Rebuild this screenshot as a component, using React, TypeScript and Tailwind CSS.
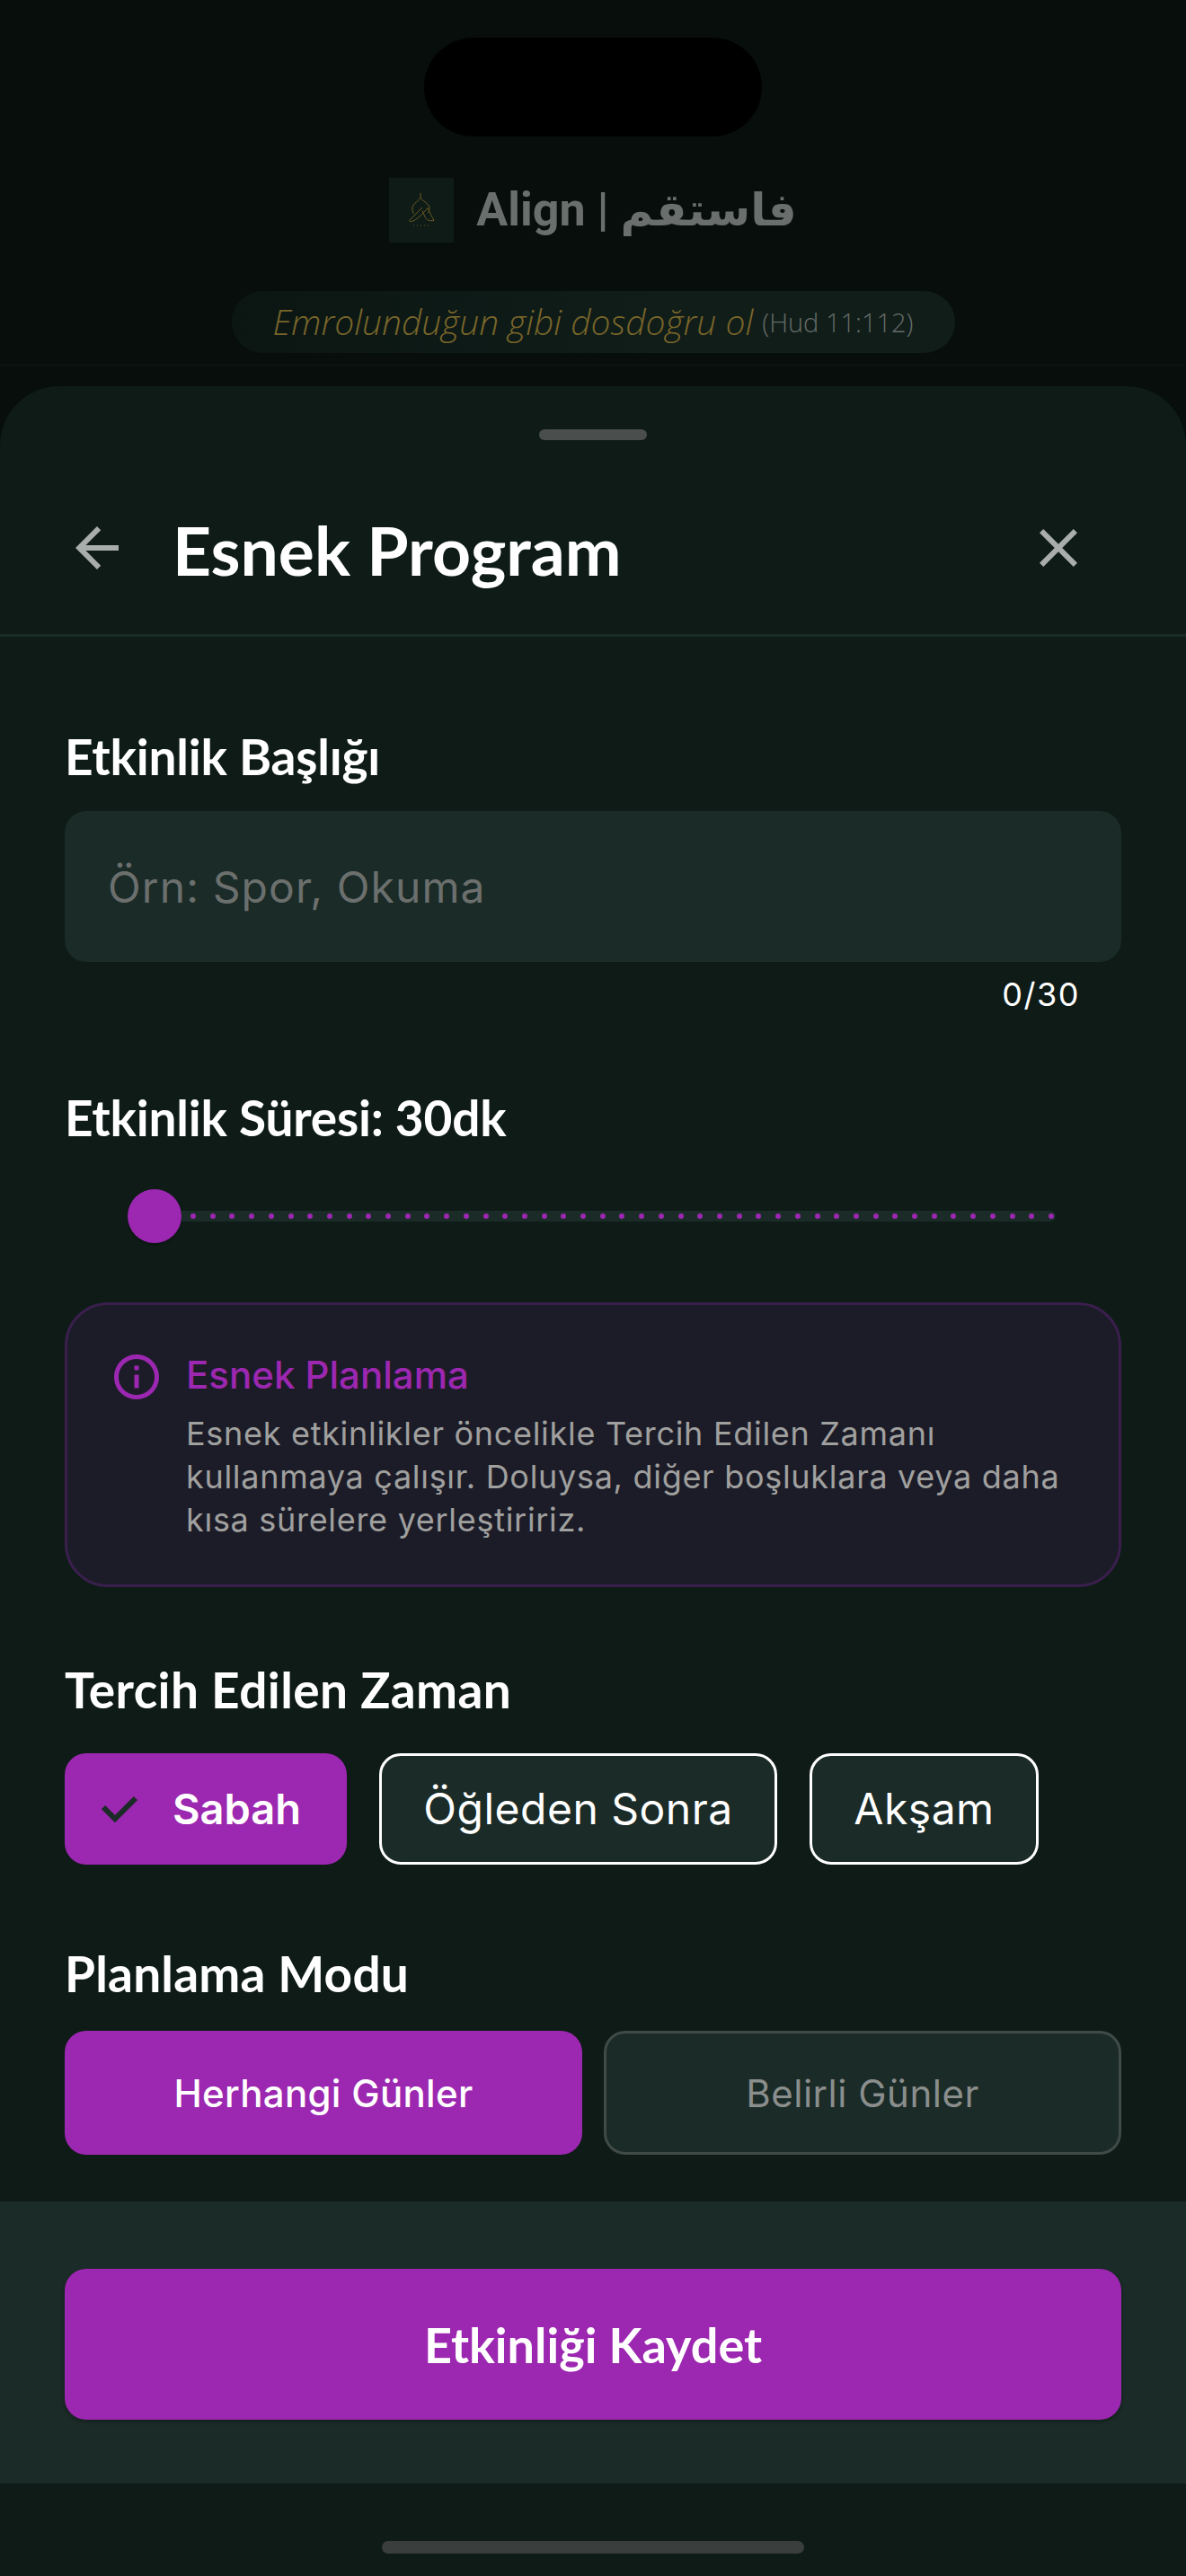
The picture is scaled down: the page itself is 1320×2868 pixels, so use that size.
const headingFont = "font-['Lato','Noto_Sans',sans-serif]";
const bodyFont = "font-['Inter','Noto_Sans',sans-serif]";

const dots = Array.from({ length: 45 });

function LogoMark() {
  return (
    <svg viewBox="0 0 72 72" className="h-[72px] w-[72px]" fill="none" stroke="#6b5a24" strokeWidth="1">
      <path d="M35 17v5M35 22c-2 4-8 6-9 11-.5 3 .5 5 1.500 7M35 22c2 4 9 6 10 11 .5 2-.5 4-1.500 6" />
      <path d="M37 33L24 46c-2 2-1.500 3 1 2.500 6-1.500 12-8 18-15 2 5 5 10 7 14-5 1-9-1-10-4l-3-7" />
      <path d="M27 53h18" strokeDasharray="1 3" />
    </svg>
  );
}

function ChipCheck() {
  return (
    <svg viewBox="0 0 40 30" className="h-[30px] w-[40px] shrink-0" fill="none" stroke="#1b2b27" strokeWidth="6">
      <path d="M2 13l13 13L38 3" />
    </svg>
  );
}

function SectionLabel({ children, className }: { children: React.ReactNode; className: string }) {
  return <h3 className={`${headingFont} text-[55px] leading-[64px] font-bold text-white ${className}`}>{children}</h3>;
}

export default function App() {
  return (
    <div className="flex h-[2868px] w-[1320px] flex-col overflow-hidden bg-[#070e0c]">
      {/* dimmed page behind the sheet */}
      <div className="flex h-[430px] shrink-0 flex-col items-center">
        <div className="mt-[42px] h-[110px] w-[376px] rounded-[55px] bg-black" />
        <div className="mt-[46px] flex h-[72px] items-center gap-[25px]">
          <div className="h-[72px] w-[72px] bg-[#0e1b17]">
            <LogoMark />
          </div>
          <span className="font-['Roboto','DejaVu_Sans',sans-serif] text-[52px] leading-[72px] font-bold text-[#6a6e6c]">
            Align | <span className="text-[50px]">فاستقم</span>
          </span>
        </div>
        <div className="mt-[54px] flex h-[69px] w-[805px] items-center justify-center rounded-[35px] bg-gradient-to-r from-[#0b1613] to-[#101d19] to-60%">
          <span className="font-['Open_Sans',sans-serif] text-[39px] font-light text-[#7a662a] italic">Emrolunduğun gibi dosdoğru ol</span>
          <span className="ml-[10px] font-['Open_Sans',sans-serif] text-[29px] font-light text-[#666b68]">(Hud 11:112)</span>
        </div>
        <div className="mt-[13px] h-px w-full bg-[#101b18]" />
      </div>

      {/* bottom sheet */}
      <div className="flex flex-1 flex-col rounded-t-[66px] bg-[#0e1b17]">
        <div className="mx-auto mt-[48px] h-[12px] w-[120px] rounded-md bg-[#4a4f4e]" />
        <div className="flex h-[219px] items-center border-b-[3px] border-[#1b2b27] pt-[24px] pr-[121px] pl-[72px]">
          <svg viewBox="0 0 24 24" className="h-[72px] w-[72px] shrink-0" fill="#a9adab">
            <path d="M20 11H7.83l5.59-5.59L12 4l-8 8 8 8 1.41-1.41L7.83 13H20v-2z" />
          </svg>
          <h2 className={`${headingFont} mt-[4px] ml-[48px] flex-1 text-[75px] leading-[84px] font-bold text-white`}>Esnek Program</h2>
          <svg viewBox="0 0 24 24" className="h-[72px] w-[72px] shrink-0 -mr-[15px]" fill="#a9adab">
            <path d="M19 6.41L17.59 5 12 10.59 6.41 5 5 6.41 10.59 12 5 17.59 6.41 19 12 13.41 17.59 19 19 17.59 13.41 12z" />
          </svg>
        </div>

        <div className="flex flex-1 flex-col px-[72px]">
          <SectionLabel className="mt-[101px] tracking-[-0.2px]">Etkinlik Başlığı</SectionLabel>
          <div className={`${bodyFont} mt-[29px] flex h-[168px] items-center rounded-[24px] bg-[#1b2b27] px-[48px] pt-[2px] text-[48px] tracking-[1.1px] text-[#6b6f6d]`}>
            Örn: Spor, Okuma
          </div>
          <div className={`${bodyFont} mt-[14px] pr-[46px] text-right text-[36px] leading-[44px] tracking-[1.5px] text-white`}>0/30</div>

          <SectionLabel className="mt-[83px] tracking-[-0.2px]">Etkinlik Süresi: 30dk</SectionLabel>
          <div className="mt-[48px] flex h-[60px] items-center pr-[73px] pl-[70px]">
            <div className="h-[60px] w-[60px] shrink-0 rounded-full bg-[#9c27b0] shadow-[0_2px_2px_rgba(0,0,0,0.25)]" />
            <div className="flex h-[12px] flex-1 items-center justify-between rounded-r-md bg-[#1b2b27] pr-[2px] pl-[10px]">
              {dots.map((_, i) => (
                <span key={i} className="h-[6px] w-[6px] rounded-full bg-[#9c27b0]" />
              ))}
            </div>
          </div>

          <div className="mt-[66px] flex h-[317px] gap-[25px] rounded-[48px] border-[3px] border-[#3a1f4d] bg-[#1c1c28] pt-[52px] pl-[53px]">
            <svg viewBox="0 0 24 24" className="-mt-[2px] h-[60px] w-[60px] shrink-0 -ml-[6px]" fill="#9c27b0">
              <path d="M11 7h2v2h-2zm0 4h2v6h-2zm1-9C6.48 2 2 6.48 2 12s4.48 10 10 10 10-4.48 10-10S17.52 2 12 2zm0 18c-4.41 0-8-3.59-8-8s3.59-8 8-8 8 3.59 8 8-3.59 8-8 8z" />
            </svg>
            <div className={bodyFont}>
              <div className="text-[42px] leading-[52px] font-medium text-[#9c27b0]">Esnek Planlama</div>
              <p className="mt-[15px] w-[985px] text-[36px] leading-[48px] tracking-[0.7px] text-[#a0a09f]">
                Esnek etkinlikler öncelikle Tercih Edilen Zamanı kullanmaya çalışır. Doluysa, diğer boşluklara veya daha kısa sürelere yerleştiririz.
              </p>
            </div>
          </div>

          <SectionLabel className="mt-[82px] tracking-[0.4px]">Tercih Edilen Zaman</SectionLabel>
          <div className={`${bodyFont} mt-[39px] flex h-[124px] gap-[36px] text-[48px]`}>
            <div className="flex w-[314px] items-center gap-[39px] rounded-[24px] bg-[#9c27b0] pl-[41px] text-[47px] font-semibold text-white">
              <ChipCheck />
              <span>Sabah</span>
            </div>
            <div className="flex w-[443px] items-center justify-center rounded-[24px] border-[3px] border-white bg-[#1b2b27] tracking-[0.5px] text-white">Öğleden Sonra</div>
            <div className="flex w-[255px] items-center justify-center rounded-[24px] border-[3px] border-white bg-[#1b2b27] tracking-[0.5px] text-white">Akşam</div>
          </div>

          <SectionLabel className="mt-[89px] tracking-[0.2px]">Planlama Modu</SectionLabel>
          <div className={`${bodyFont} mt-[32px] grid h-[138px] grid-cols-2 gap-[24px] text-[42px]`}>
            <div className="flex items-center justify-center rounded-[24px] bg-[#9c27b0] font-medium tracking-[0.3px] text-white">Herhangi Günler</div>
            <div className="flex items-center justify-center rounded-[24px] border-[3px] border-[#404a47] bg-[#1b2b27] tracking-[0.5px] text-[#8a8e8c]">Belirli Günler</div>
          </div>
        </div>

        <div className="flex h-[314px] shrink-0 items-start bg-[#1b2b27] px-[72px] pt-[75px]">
          <div className={`${headingFont} flex h-[168px] w-full items-center justify-center rounded-[24px] bg-[#9c27b0] text-[54px] font-bold text-white shadow-[0_2px_4px_rgba(0,0,0,0.3)]`}>
            Etkinliği Kaydet
          </div>
        </div>
        <div className="flex h-[103px] shrink-0 justify-center pt-[64px]">
          <div className="h-[14px] w-[470px] rounded-full bg-[#3a3f3d]" />
        </div>
      </div>
    </div>
  );
}
